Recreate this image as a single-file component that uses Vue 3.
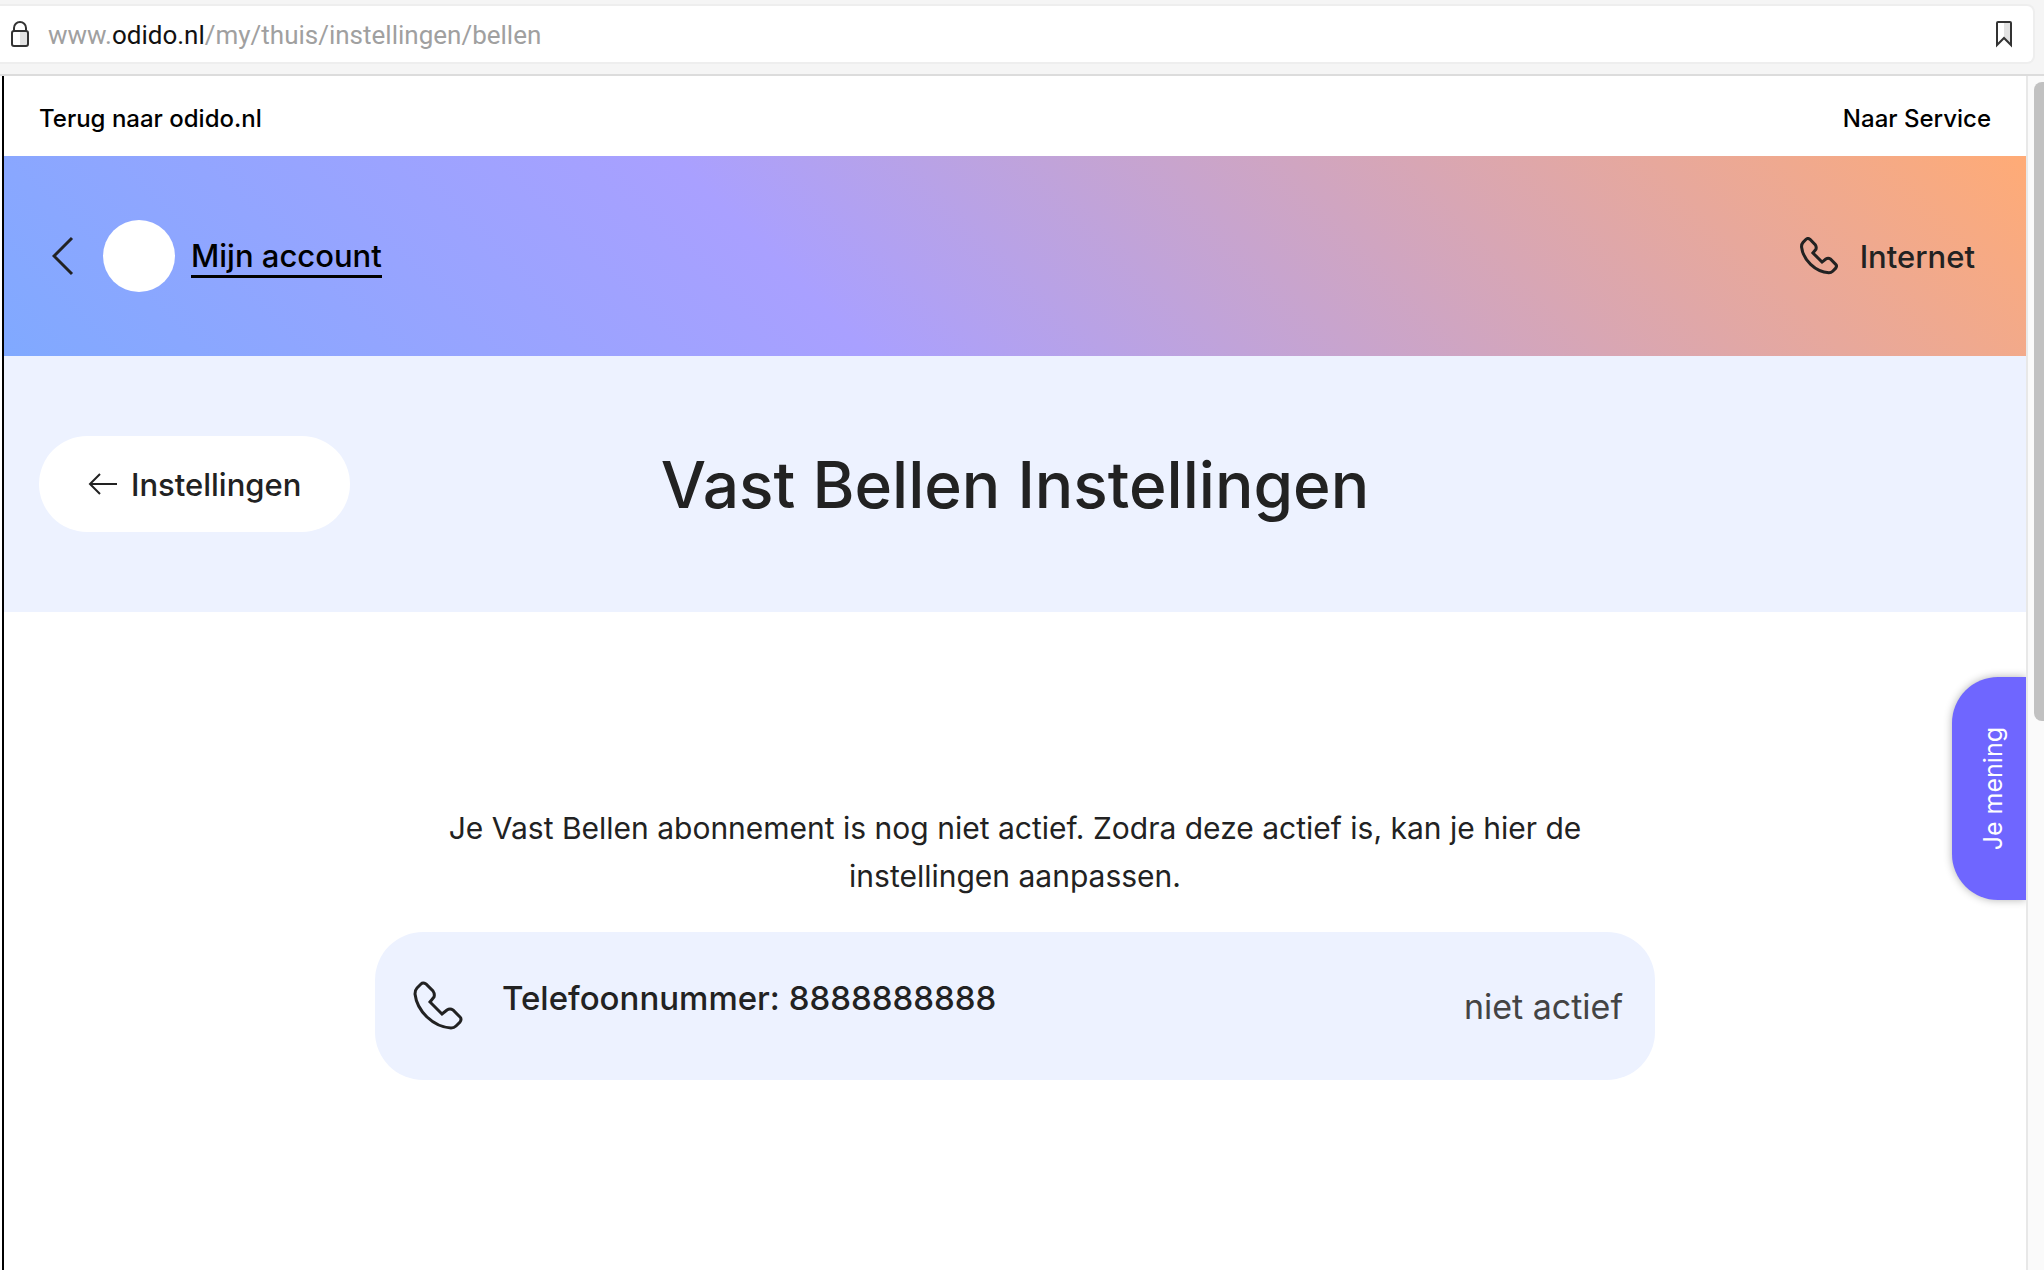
<template>
  <div class="browser">
    <header class="toolbar">
      <div class="address">
        <svg class="lock" viewBox="0 0 18 28" aria-hidden="true">
          <path d="M9 12h7v13H9z" fill="#e2e2e2" />
          <path
            d="M3 11V8a6 6 0 0 1 12 0v3M3 11h12a2 2 0 0 1 2 2v11a2 2 0 0 1-2 2H3a2 2 0 0 1-2-2V13a2 2 0 0 1 2-2z"
            fill="none"
            stroke="#333"
            stroke-width="2"
          />
        </svg>
        <p class="url">www.<span class="domain">odido.nl</span>/my/thuis/instellingen/bellen</p>
        <button class="bookmark" type="button" aria-label="Bladwijzer">
          <svg viewBox="0 0 18 28" aria-hidden="true">
            <path d="M9 2h7v22l-7-6z" fill="#e2e2e2" />
            <path
              d="M2 25V3a1 1 0 0 1 1-1h12a1 1 0 0 1 1 1v22l-7-7z"
              fill="none"
              stroke="#333"
              stroke-width="2"
            />
          </svg>
        </button>
      </div>
    </header>

    <div class="viewport">
      <div class="page">
        <nav class="topbar">
          <a href="#">Terug naar odido.nl</a>
          <a href="#">Naar Service</a>
        </nav>

        <div class="account">
          <button class="back" type="button" aria-label="Terug">
            <svg viewBox="0 0 22 40" aria-hidden="true">
              <path d="M20 2 2 20l18 18" fill="none" stroke="#222" stroke-width="3" />
            </svg>
          </button>
          <span class="avatar"></span>
          <a class="account-link" href="#">Mijn account</a>
          <div class="product">
            <svg class="phone" viewBox="0 0 50 50" aria-hidden="true">
              <path :d="phonePath" />
            </svg>
            <span>Internet</span>
          </div>
        </div>

        <div class="heading">
          <button class="settings" type="button">
            <svg viewBox="0 0 30 24" aria-hidden="true">
              <path d="M29 12H2M12 2 2 12l10 10" fill="none" stroke="#222" stroke-width="2" />
            </svg>
            <span>Instellingen</span>
          </button>
          <h1>Vast Bellen Instellingen</h1>
        </div>

        <main class="content">
          <p class="intro">
            Je Vast Bellen abonnement is nog niet actief. Zodra deze actief is, kan je hier de
            instellingen aanpassen.
          </p>
          <section class="card">
            <svg class="phone" viewBox="0 0 50 50" aria-hidden="true">
              <path :d="phonePath" />
            </svg>
            <h2>Telefoonnummer: {{ phoneNumber }}</h2>
            <span class="status">niet actief</span>
          </section>
        </main>

        <button class="feedback" type="button"><span>Je mening</span></button>
      </div>
      <div class="scrollbar"><div class="thumb"></div></div>
    </div>
  </div>
</template>

<script setup>
import { ref } from 'vue';

const phoneNumber = ref('8888888888');

const phonePath =
  'M8 3 4 7Q2 9 2 13C4 30 20 46 38 47Q41 47 43 45L47 41Q49 38 47 36L40 29Q37 27 34 29L29 33L17 21L21 16Q22 13 20 10L13 3Q10 1 8 3Z';
</script>

<style>
body {
  margin: 0;
  background: #fff;
}
</style>

<style scoped>
* {
  box-sizing: border-box;
}

.browser {
  display: flex;
  flex-direction: column;
  min-height: 100vh;
  font-family: Inter, 'Liberation Sans', sans-serif;
  color: #222;
}

button {
  padding: 0;
  border: 0;
  background: none;
  font: inherit;
  color: inherit;
  cursor: pointer;
}

svg {
  display: block;
}

/* 浏览器地址栏 */
.toolbar {
  height: 76px;
  padding: 4px 9px 0 0;
  background: #f5f5f5;
  border-bottom: 2px solid #dcdcdc;
}

.address {
  display: flex;
  align-items: center;
  height: 60px;
  padding: 0 20px 0 10px;
  background: #fff;
  border: 2px solid #eee;
  border-left: 0;
  border-radius: 0 8px 8px 0;
}

.lock {
  width: 20px;
  height: 28px;
}

.url {
  flex: 1;
  margin: 2px 0 0 18px;
  font-family: Roboto, sans-serif;
  font-size: 26px;
  line-height: 32px;
  color: #a0a0a0;
}

.domain {
  color: #111;
}

.bookmark svg {
  width: 18px;
  height: 28px;
}

.viewport {
  display: flex;
  flex: 1;
  padding-left: 2px;
}

.page {
  position: relative;
  flex: 1;
  border-left: 2px solid #000;
}

.scrollbar {
  width: 18px;
  padding: 6px 0 0 6px;
  background: #fafafa;
  border-left: 2px solid #e8e8e8;
}

.thumb {
  height: 639px;
  background: #c1c1c1;
  border-radius: 8px 0 0 8px;
}

.topbar {
  display: flex;
  align-items: center;
  justify-content: space-between;
  height: 80px;
  padding: 4px 35px 0;
  font-size: 24px;
  font-weight: 500;
}

.topbar a {
  color: #000;
  text-decoration: none;
}

/* 渐变横幅 */
.account {
  display: flex;
  align-items: center;
  height: 200px;
  padding: 0 51px 0 48px;
  background: linear-gradient(45deg, #80a9ff 0%, #a9a0ff 39%, #ffab76 100%);
  font-size: 31px;
  font-weight: 500;
}

.back svg {
  width: 22px;
  height: 40px;
}

.avatar {
  width: 72px;
  height: 72px;
  margin-left: 29px;
  border-radius: 50%;
  background: #fff;
}

.account-link {
  margin-top: 2px;
  margin-left: 16px;
  border-bottom: 3px solid #000;
  line-height: 38px;
  color: #000;
  text-decoration: none;
}

.product {
  display: flex;
  align-items: center;
  gap: 22px;
  margin-left: auto;
}

.phone {
  width: 38px;
  height: 38px;
  fill: none;
  stroke: #222;
  stroke-width: 4;
}

.heading {
  display: grid;
  grid-template-columns: 1fr auto 1fr;
  align-items: center;
  height: 256px;
  padding: 0 35px;
  background: #edf2ff;
}

.settings {
  display: flex;
  align-items: center;
  justify-self: start;
  gap: 13px;
  height: 96px;
  padding: 0 49px;
  border-radius: 48px;
  background: #fff;
  font-size: 31px;
  font-weight: 500;
}

.settings svg {
  width: 30px;
  height: 24px;
}

h1 {
  margin: 0;
  font-size: 64px;
  font-weight: 500;
}

.content {
  display: flex;
  flex-direction: column;
  align-items: center;
  padding: 192px 35px 0;
}

.intro {
  max-width: 1180px;
  margin: 0;
  font-size: 30px;
  line-height: 48px;
  text-align: center;
}

.card {
  display: flex;
  align-items: center;
  width: 100%;
  max-width: 1280px;
  height: 148px;
  margin-top: 32px;
  padding: 0 32px 0 38px;
  border-radius: 48px;
  background: #edf2ff;
}

.card .phone {
  width: 50px;
  height: 50px;
  stroke-width: 3;
}

.card h2 {
  margin: 0 0 16px 39px;
  font-size: 33px;
  font-weight: 500;
}

.status {
  margin-left: auto;
  font-size: 34px;
  color: #444;
}

/* 右侧反馈按钮 */
.feedback {
  position: absolute;
  top: 601px;
  right: 0;
  display: flex;
  align-items: center;
  justify-content: center;
  width: 74px;
  height: 223px;
  padding-left: 8px;
  border-radius: 46px 0 0 46px;
  background: #6f66ff;
  box-shadow: 0 0 8px rgba(0, 0, 0, 0.3);
  clip-path: inset(-12px 0 -12px -12px);
  font-size: 25px;
  color: #fff;
}

.feedback span {
  writing-mode: vertical-rl;
  transform: rotate(180deg);
}
</style>
